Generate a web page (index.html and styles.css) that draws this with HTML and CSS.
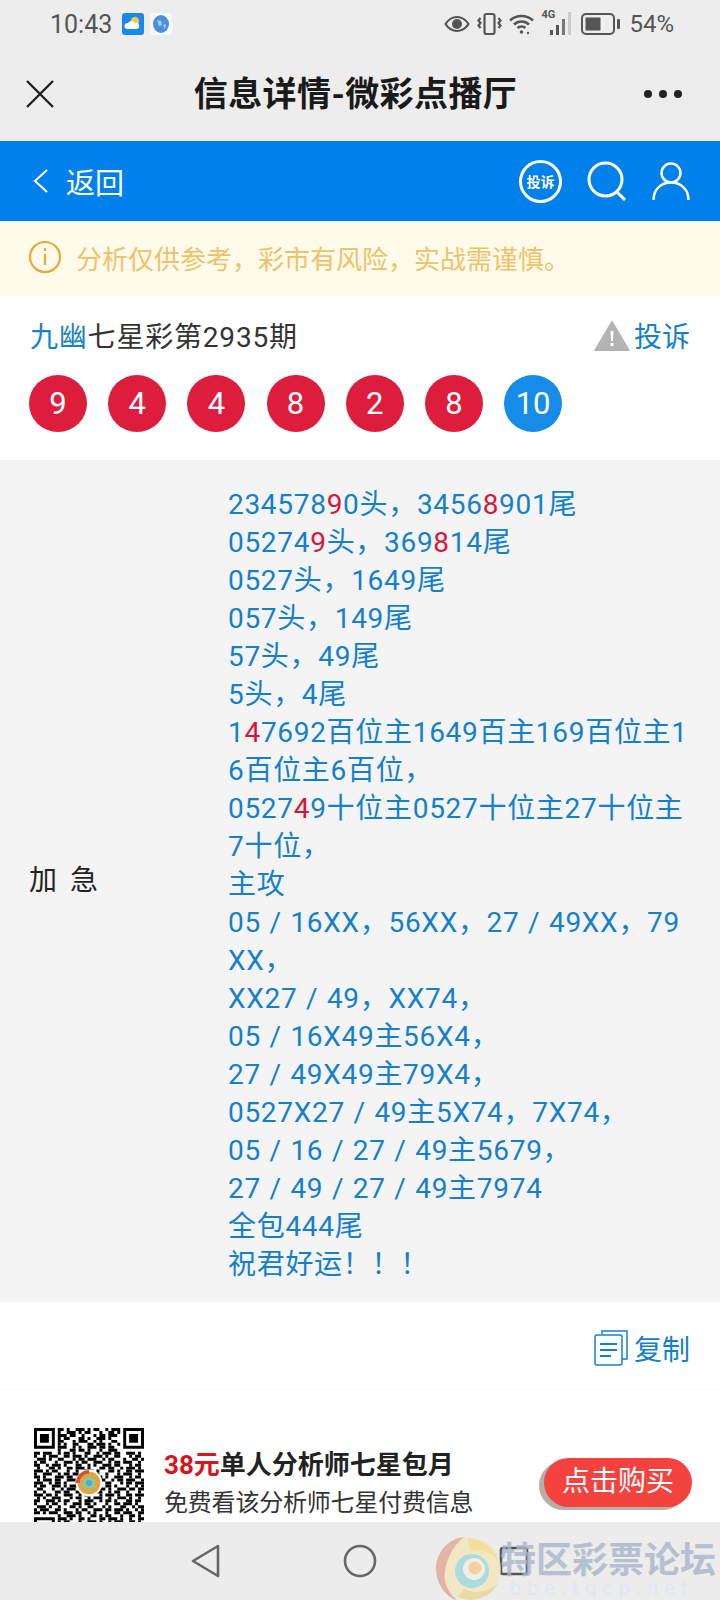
FILE: index.html
```html
<!DOCTYPE html>
<html lang="zh-cn">

<head>
    <meta charset="UTF-8">
    <meta name="viewport" content="width=device-width, initial-scale=1.0">
    <title>信息详情-微彩点播厅</title>
    <link rel="stylesheet" href="styles.css">
</head>

<body>
    <div class="page">

        <div class="status">
            <span class="time">10:43</span>
            <svg class="app-icon" width="22" height="22" viewBox="0 0 22 22">
                <rect width="22" height="22" rx="3" fill="#1b87e8" />
                <circle cx="13" cy="8" r="4" fill="#f7c948" />
                <path d="M5 16a3 3 0 0 1 1-6 4 4 0 0 1 7 0 3 3 0 0 1 2 6z" fill="#fff" />
            </svg>
            <svg class="app-icon globe" width="22" height="22" viewBox="0 0 22 22">
                <rect width="22" height="22" rx="4" fill="#f8f8f8" />
                <ellipse cx="11" cy="11" rx="8" ry="9" fill="#4d8ee0" />
                <path d="M7 7l4 1 1 4-3 1zM13 12l3-1-1 5z" fill="#a9cdf3" />
            </svg>
            <div class="status-right">
                <svg width="26" height="18" viewBox="0 0 26 18" fill="none">
                    <path d="M1.500 9C5 3.500 9 2 13 2s8 1.500 11.500 7C21 14.500 17 16 13 16S5 14.500 1.500 9z" stroke="#555" stroke-width="2.200" />
                    <circle cx="13" cy="9" r="5" fill="#555" />
                </svg>
                <svg width="25" height="24" viewBox="0 0 25 24" fill="none" stroke="#555" stroke-width="2.200">
                    <rect x="7.500" y="2" width="10" height="20" rx="2" />
                    <path d="M3.500 6l-2 2.500 2 2.500-2 2.500 2 2.500M21.500 6l2 2.500-2 2.500 2 2.500-2 2.500" />
                </svg>
                <svg width="25" height="22" viewBox="0 0 25 22" fill="none" stroke="#555" stroke-width="2.600">
                    <path d="M1 7.500c6.500-6 16.500-6 23 0M5 11.500c4-4 11-4 15 0M8.500 15c2.200-2 5.800-2 8 0" />
                    <circle cx="12.500" cy="19" r="1.800" fill="#555" stroke="none" />
                    <circle cx="19" cy="20" r="1.200" fill="#555" stroke="none" />
                </svg>
                <div class="net">
                    <span class="net-label">4G</span>
                    <svg width="22" height="24" viewBox="0 0 22 24">
                        <rect x="0" y="19" width="3" height="5" fill="#555" />
                        <rect x="6" y="14" width="3" height="10" fill="#555" />
                        <rect x="12" y="8" width="3" height="16" fill="#777" />
                        <rect x="18" y="1" width="3" height="23" fill="#ccc" />
                    </svg>
                </div>
                <svg class="battery" width="39" height="22" viewBox="0 0 39 22">
                    <rect x="1" y="1" width="32" height="20" rx="4" fill="none" stroke="#555" stroke-width="2" />
                    <rect x="4.500" y="4.500" width="15" height="13" fill="#555" />
                    <rect x="36" y="6" width="3" height="10" rx="1" fill="#555" />
                </svg>
                <span class="percent">54%</span>
            </div>
        </div>

        <div class="topbar">
            <svg width="28" height="28" viewBox="0 0 28 28" fill="none" stroke="#222" stroke-width="2.400">
                <path d="M1 1l26 26M27 1L1 27" />
            </svg>
            <h1 class="topbar-title">信息详情-微彩点播厅</h1>
            <div class="dots"><i></i><i></i><i></i></div>
        </div>

        <div class="bluebar">
            <svg width="15" height="24" viewBox="0 0 15 24" fill="none" stroke="#fff" stroke-width="2">
                <path d="M14 1L2 12l12 11" />
            </svg>
            <span class="back-text">返回</span>
            <div class="bluebar-icons">
                <span class="report-circle">投诉</span>
                <svg width="40" height="40" viewBox="0 0 40 40" fill="none" stroke="#fff" stroke-width="3">
                    <circle cx="18.500" cy="18.500" r="16.500" />
                    <path d="M29 30l9 9" />
                </svg>
                <svg width="38" height="38" viewBox="0 0 38 38" fill="none" stroke="#fff" stroke-width="2.500">
                    <circle cx="19" cy="11" r="9.500" />
                    <path d="M1.500 38c0-10 7-17.500 17.500-17.500S36.500 28 36.500 38" />
                </svg>
            </div>
        </div>

        <div class="notice">
            <svg width="34" height="34" viewBox="0 0 34 34" fill="none" stroke="#e9a93a" stroke-width="2.200">
                <circle cx="17" cy="17" r="15" />
                <path d="M17 14v11M17 8v3" />
            </svg>
            <span>分析仅供参考，彩市有风险，实战需谨慎。</span>
        </div>

        <div class="info">
            <div class="info-head">
                <div class="issue"><span class="blue">九幽</span>七星彩第2935期</div>
                <div class="complain">
                    <svg width="36" height="31" viewBox="0 0 36 31">
                        <path d="M18 1L35.500 30.500H.500z" fill="#b3b3b3" stroke="#b3b3b3" stroke-linejoin="round" />
                        <path d="M16.500 11h3l-.5 10h-2zM16.500 23h3v3h-3z" fill="#fff" />
                    </svg>
                    <span class="blue">投诉</span>
                </div>
            </div>
            <div class="balls">
                <span class="ball">9</span>
                <span class="ball">4</span>
                <span class="ball">4</span>
                <span class="ball">8</span>
                <span class="ball">2</span>
                <span class="ball">8</span>
                <span class="ball ball-blue">10</span>
            </div>
        </div>

        <div class="detail">
            <div class="detail-label">加 急</div>
            <div class="detail-text">
                234578<b>9</b>0头，3456<b>8</b>901尾<br>
                05274<b>9</b>头，369<b>8</b>14尾<br>
                0527头，1649尾<br>
                057头，149尾<br>
                57头，49尾<br>
                5头，4尾<br>
                1<b>4</b>7692百位主1649百主169百位主16百位主6百位，<br>
                0527<b>4</b>9十位主0527十位主27十位主7十位，<br>
                主攻<br>
                05 / 16XX，56XX，27 / 49XX，79XX，<br>
                XX27 / 49，XX74，<br>
                05 / 16X49主56X4，<br>
                27 / 49X49主79X4，<br>
                0527X27 / 49主5X74，7X74，<br>
                05 / 16 / 27 / 49主5679，<br>
                27 / 49 / 27 / 49主7974<br>
                全包444尾<br>
                祝君好运！！！
            </div>
        </div>

        <div class="copy-row">
            <svg width="34" height="36" viewBox="0 0 34 36" fill="none" stroke="#1480cc" stroke-width="1.500">
                <path d="M8 4V1h25v28h-5" />
                <rect x="1" y="5" width="27" height="30" rx="2" fill="#fff" />
                <path d="M6 14h17M6 20h17M6 26h11" stroke-width="2" />
            </svg>
            <span class="blue">复制</span>
        </div>

        <div class="promo">
            <svg class="qr" width="110" height="110" viewBox="0 0 37 37">
                <rect width="37" height="37" fill="#fff" />
                <g fill="none" stroke="#000" stroke-width="1">
                    <path d="M0 .5h7M30 .5h7M0 6.500h7M30 6.500h7M.5 0v7M6.500 0v7M30.500 0v7M36.500 0v7M0 30.500h7M0 36.500h7M.5 30v7M6.500 30v7" />
                </g>
                <path d="M2 2h3v3H2zM32 2h3v3h-3zM2 32h3v3H2z" />
                <g fill="none" stroke="#000" stroke-width="1">
                    <path d="M8 .5h21" stroke-dasharray="2 1 1 2 3 1 1 1 2 2 1 1 3" />
                    <path d="M8 1.500h21" stroke-dasharray="1 2 3 1 1 1 2 3 1 2 2 1" />
                    <path d="M8 2.500h21" stroke-dasharray="3 1 2 2 1 3 1 1 2 1 3 1" />
                    <path d="M8 3.500h21" stroke-dasharray="1 1 2 3 2 1 1 2 3 1 1 3" />
                    <path d="M8 4.500h21" stroke-dasharray="2 3 1 1 3 2 1 1 1 3 2 1" />
                    <path d="M8 5.500h21" stroke-dasharray="1 1 1 2 2 3 2 1 3 1 1 2" />
                    <path d="M8 6.500h21" stroke-dasharray="3 2 1 1 1 2 3 1 2 1 2 2" />
                    <path d="M8 7.500h21" stroke-dasharray="1 3 2 1 2 1 1 3 1 2 3 1" />
                    <path d="M0 8.500h37" stroke-dasharray="2 1 3 2 1 1 2 1 1 3 2 2 1 1 3 1 2 2 3 1 1" />
                    <path d="M0 9.500h37" stroke-dasharray="1 2 1 1 3 2 2 1 3 1 1 2 3 1 1 2 2 3 1 1 2" />
                    <path d="M1 10.500h36" stroke-dasharray="3 1 1 2 2 3 1 1 2 1 3 2 1 1 2 3 1 2 2 1" />
                    <path d="M0 11.500h37" stroke-dasharray="1 1 2 3 1 2 3 1 1 1 2 2 3 2 1 1 2 1 3 2" />
                    <path d="M0 12.500h37" stroke-dasharray="2 2 1 1 3 1 1 3 2 2 1 1 1 2 3 1 2 3 1 1" />
                    <path d="M1 13.500h36" stroke-dasharray="1 3 2 1 1 2 2 1 3 1 1 3 2 1 2 2 1 1 3 1" />
                    <path d="M0 14.500h37" stroke-dasharray="3 1 1 1 2 3 1 2 1 2 3 1 1 3 2 1 1 2 2 1" />
                    <path d="M0 15.500h37" stroke-dasharray="1 2 3 2 1 1 2 1 2 3 1 1 2 2 1 3 1 1 3 2" />
                    <path d="M0 16.500h37" stroke-dasharray="2 1 1 3 3 1 2 2 1 1 2 3 1 1 1 2 3 2 1 1" />
                    <path d="M1 17.500h36" stroke-dasharray="1 1 3 1 2 2 3 1 1 2 1 2 3 2 1 1 2 1 3 2" />
                    <path d="M0 18.500h37" stroke-dasharray="3 2 1 1 2 1 1 3 2 1 3 1 1 2 2 3 1 1 2 1" />
                    <path d="M0 19.500h37" stroke-dasharray="1 1 2 2 3 1 1 1 3 2 1 2 1 3 2 1 1 3 1 2" />
                    <path d="M1 20.500h36" stroke-dasharray="2 3 1 2 1 1 3 1 1 3 2 1 2 1 1 2 3 1 2 1" />
                    <path d="M0 21.500h37" stroke-dasharray="1 2 1 3 2 1 2 2 3 1 1 1 3 2 1 1 2 2 1 3" />
                    <path d="M0 22.500h37" stroke-dasharray="3 1 2 1 1 2 3 2 1 1 2 3 1 1 3 1 1 2 2 1" />
                    <path d="M1 23.500h36" stroke-dasharray="1 1 1 2 3 3 1 1 2 2 1 1 3 2 1 2 3 1 1 2" />
                    <path d="M0 24.500h37" stroke-dasharray="2 2 3 1 1 1 2 3 1 1 3 2 1 1 2 1 1 3 2 1" />
                    <path d="M0 25.500h37" stroke-dasharray="1 3 1 1 2 2 1 2 3 1 2 1 1 3 1 2 2 1 3 1" />
                    <path d="M1 26.500h36" stroke-dasharray="3 1 1 2 1 3 2 1 1 2 2 3 1 1 1 3 2 2 1 1" />
                    <path d="M0 27.500h37" stroke-dasharray="1 1 3 2 2 1 1 3 1 1 2 2 3 1 2 1 3 1 1 2" />
                    <path d="M0 28.500h37" stroke-dasharray="2 1 1 1 3 2 3 1 2 2 1 1 1 3 1 2 2 1 3 2" />
                    <path d="M8 29.500h29" stroke-dasharray="1 2 3 1 1 3 2 1 1 1 2 3 1 2 2 1" />
                    <path d="M8 30.500h29" stroke-dasharray="3 1 1 2 2 1 1 3 2 1 3 1 1 2 1 2" />
                    <path d="M8 31.500h29" stroke-dasharray="1 1 2 3 1 2 3 1 1 2 1 1 3 2 2 1" />
                    <path d="M8 32.500h29" stroke-dasharray="2 3 1 1 3 1 1 2 2 3 1 2 1 1 1 3" />
                    <path d="M8 33.500h29" stroke-dasharray="1 1 3 2 1 2 2 1 3 1 1 3 2 1 2 1" />
                    <path d="M8 34.500h29" stroke-dasharray="3 2 1 1 2 1 3 1 1 2 2 1 1 3 1 2" />
                    <path d="M8 35.500h29" stroke-dasharray="1 2 2 1 3 3 1 1 2 1 1 2 3 1 2 1" />
                    <path d="M8 36.500h29" stroke-dasharray="2 1 1 3 1 1 2 3 1 2 3 1 1 1 2 2" />
                </g>
                <circle cx="18.500" cy="18.500" r="4.500" fill="#fff" />
                <circle cx="18.500" cy="18.500" r="3.800" fill="#e9a13c" />
                <path d="M14.700 18.500a3.800 3.800 0 0 1 3.800-3.800" fill="none" stroke="#d9502e" stroke-width="1.200" />
                <circle cx="18.500" cy="18.500" r="2.300" fill="#8cc98f" />
                <circle cx="18.500" cy="18.500" r="1" fill="#4da6dd" />
            </svg>
            <div class="promo-text">
                <div class="promo-title"><span class="red">38元</span>单人分析师七星包月</div>
                <div class="promo-sub">免费看该分析师七星付费信息</div>
            </div>
            <div class="buy-btn">点击购买</div>
        </div>

        <div class="navbar">
            <svg width="30" height="34" viewBox="0 0 30 34" fill="none" stroke="#666" stroke-width="2.600" stroke-linejoin="round">
                <path d="M27 2v30L2 17z" />
            </svg>
            <svg class="nav-home" width="34" height="34" viewBox="0 0 34 34" fill="none" stroke="#666" stroke-width="2.600">
                <circle cx="17" cy="17" r="15" />
            </svg>
            <svg width="30" height="30" viewBox="0 0 30 30" fill="none" stroke="#555" stroke-width="2.600">
                <rect x="2" y="2" width="26" height="26" rx="2" />
            </svg>
        </div>

        <div class="watermark">
            <svg class="wm-logo" width="68" height="68" viewBox="0 0 68 68" fill="none">
                <circle cx="36" cy="34" r="31" fill="#f3e6b8" />
                <path d="M30 2C12 4 1 20 2 36c1 14 10 26 22 30-10-8-15-18-13-30C13 22 20 10 30 2z" fill="#dfa796" />
                <path d="M34 3c14 1 26 10 30 22-8-8-18-12-28-9z" fill="#f2dc8a" />
                <circle cx="38" cy="36" r="17" fill="#9dd8e0" />
                <circle cx="40" cy="34" r="11" fill="#f3efe4" />
                <circle cx="41" cy="33" r="6.500" fill="#f3cb8c" />
                <path d="M24 62c14 6 32 2 40-14-8 8-22 12-34 6z" fill="#ebd694" />
            </svg>
            <div class="wm-text">
                <div class="wm-name">特区彩票论坛</div>
                <div class="wm-url">bbe.tqcp.net</div>
            </div>
        </div>

    </div>
</body>

</html>
```

FILE: styles.css
```css
* {
    box-sizing: border-box;
}

html,
body {
    margin: 0;
    padding: 0;
}

body {
    font-family: Roboto, "Noto Sans CJK SC", sans-serif;
    background-color: #fff;
}

.page {
    position: relative;
    width: 720px;
    height: 1600px;
    overflow: hidden;
}

.blue {
    color: #1480cc;
}

.red {
    color: #d8141c;
}

/* 状态栏 */
.status {
    display: flex;
    align-items: center;
    height: 50px;
    padding: 0 46px 2px 50px;
    background-color: #ededed;
    color: #555;
}

.time {
    font-size: 25px;
    margin-right: 10px;
}

.app-icon {
    flex: none;
}

.globe {
    margin-left: 6px;
}

.status-right {
    display: flex;
    align-items: center;
    gap: 7px;
    margin-left: auto;
}

.net {
    position: relative;
    width: 31px;
    height: 26px;
    display: flex;
    justify-content: flex-end;
}

.net-label {
    position: absolute;
    left: 0;
    top: -3px;
    font-size: 11px;
    font-weight: 700;
}

.battery {
    margin-left: 2px;
}

.percent {
    font-size: 24px;
    margin-left: 2px;
}

/* 标题栏 */
.topbar {
    display: flex;
    align-items: center;
    justify-content: space-between;
    height: 91px;
    padding: 0 38px 0 26px;
    background-color: #ededed;
    border-bottom: 3px solid #f3e7e0;
}

.topbar-title {
    margin: 0 0 0 13px;
    font-size: 34px;
    font-weight: 700;
    line-height: 48px;
    letter-spacing: .4px;
    color: #1a1a1a;
}

.dots {
    display: flex;
    gap: 7px;
}

.dots i {
    width: 8px;
    height: 8px;
    border-radius: 50%;
    background-color: #222;
}

.bluebar {
    display: flex;
    align-items: center;
    height: 80px;
    padding: 0 30px 0 33px;
    background-color: #0080ea;
    color: #fff;
}

.back-text {
    margin-left: 18px;
    font-size: 29px;
}

.bluebar-icons {
    display: flex;
    align-items: center;
    gap: 25px;
    margin-left: auto;
}

.report-circle {
    display: flex;
    align-items: center;
    justify-content: center;
    width: 43px;
    height: 43px;
    border: 3px solid #fff;
    border-radius: 50%;
    font-size: 14px;
    font-weight: 700;
}

.notice {
    display: flex;
    align-items: center;
    gap: 14px;
    height: 75px;
    padding: 0 0 3px 28px;
    background-color: #fffbea;
    color: #eec26a;
    font-size: 26px;
}

/* 期号和开奖号码 */
.info {
    height: 164px;
    padding: 19px 30px 0 29px;
}

.info-head {
    display: flex;
    align-items: center;
    justify-content: space-between;
    height: 40px;
    font-size: 28px;
    color: #333;
}

.issue {
    padding-left: 1px;
    letter-spacing: .8px;
}

.complain {
    display: flex;
    align-items: center;
    gap: 4px;
}

.balls {
    display: flex;
    gap: 21.2px;
    margin-top: 20px;
}

.ball {
    width: 58px;
    height: 57px;
    line-height: 57px;
    border-radius: 50%;
    text-align: center;
    font-size: 31px;
    color: #fff;
    background-color: #dc1e3c;
}

.ball-blue {
    background-color: #168ce8;
}

/* 内容 */
.detail {
    display: flex;
    align-items: center;
    height: 842px;
    padding: 0 30px 0 29px;
    background-color: #f4f4f4;
}

.detail-label {
    flex: none;
    width: 199px;
    padding-bottom: 6px;
    font-size: 28px;
    letter-spacing: 2px;
    color: #222;
    word-spacing: 2px;
}

.detail-text {
    width: 462px;
    padding-top: 8px;
    font-size: 28px;
    line-height: 38px;
    letter-spacing: .7px;
    word-spacing: 1px;
    color: #1480cc;
    word-break: break-all;
}

.detail-text b {
    font-weight: 400;
    color: #d8143a;
}

.copy-row {
    display: flex;
    align-items: center;
    justify-content: flex-end;
    gap: 6px;
    height: 88px;
    padding: 4px 30px 0 0;
    font-size: 28px;
    border-bottom: 1px solid #fafafa;
}

/* 购买 */
.promo {
    display: flex;
    align-items: flex-start;
    padding: 38px 28px 0 34px;
}

.promo-text {
    margin: 18px 0 0 20px;
}

.promo-title {
    font-size: 26px;
    font-weight: 700;
    line-height: 38px;
    color: #222;
}

.promo-sub {
    font-size: 24px;
    line-height: 38px;
    letter-spacing: -.2px;
    color: #333;
}

.buy-btn {
    width: 148px;
    height: 49px;
    margin: 30px 0 0 auto;
    border-radius: 25px;
    background-color: #f4433f;
    box-shadow: -5px 3px 0 #b5afa8;
    color: #fff;
    font-size: 28px;
    line-height: 47px;
    text-align: center;
}

/* 底部导航 */
.navbar {
    position: absolute;
    left: 0;
    right: 0;
    bottom: 0;
    display: flex;
    align-items: center;
    height: 78px;
    padding: 0 0 0 191px;
    background-color: #ececec;
}

.nav-home {
    margin-left: 122px;
    margin-right: 122px;
}

.watermark {
    position: absolute;
    left: 434px;
    top: 1535px;
    display: flex;
    opacity: .8;
}

.wm-logo {
    flex: none;
}

.wm-text {
    margin-left: -2px;
}

.wm-name {
    margin-top: 9px;
    font-size: 36px;
    font-weight: 700;
    line-height: 34px;
    white-space: nowrap;
    color: #a9b6ca;
}

.wm-url {
    padding-left: 10px;
    font-size: 20px;
    line-height: 20px;
    letter-spacing: 6px;
    white-space: nowrap;
    color: #dfe6f0;
}
```
